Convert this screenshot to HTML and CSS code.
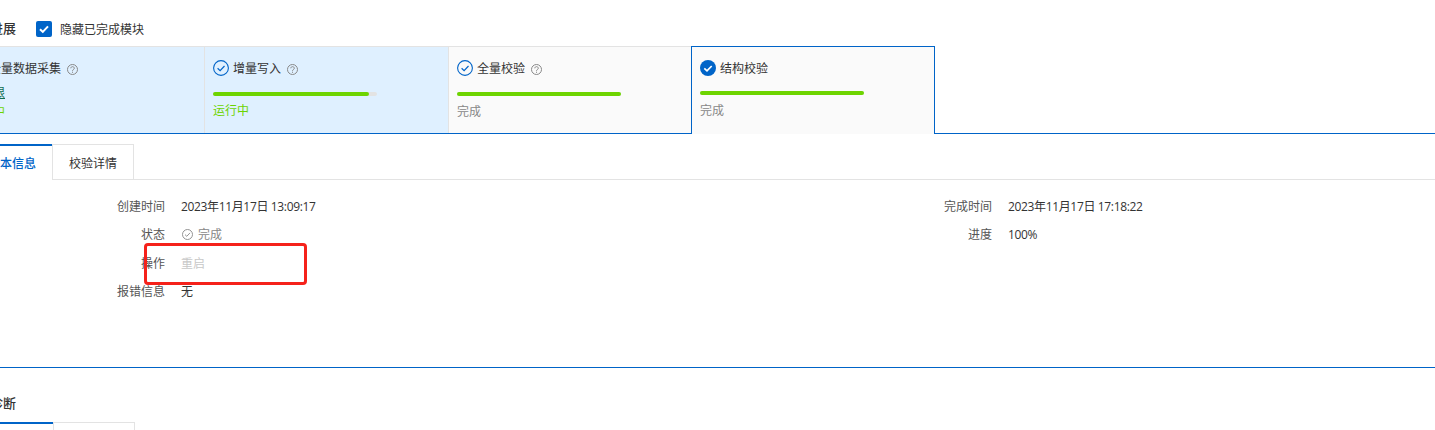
FILE: index.html
```html
<!DOCTYPE html>
<html lang="zh-CN">
<head>
<meta charset="utf-8">
<title>进展</title>
<link rel="stylesheet" href="styles.css">
</head>
<body>
<div class="page">
  <header class="section-head">
    <h2 class="section-title">进展</h2>
    <label class="hide-done">
      <span class="checkbox"><svg viewBox="0 0 16 16" width="16" height="16"><path d="M4 8.300l2.800 2.600L12 5.400" fill="none" stroke="#fff" stroke-width="2"/></svg></span>
      <span>隐藏已完成模块</span>
    </label>
  </header>

  <div class="steps">
    <div class="step step-running">
      <div class="step-head">
        <svg class="icon-check" viewBox="0 0 16 16"><circle cx="8" cy="8" r="7.400" fill="none" stroke="#0064c8" stroke-width="1.100"/><path d="M4.600 8.200l2.500 2.400 4.400-4.600" fill="none" stroke="#0064c8" stroke-width="1.200"/></svg>
        <span class="step-name">全量数据采集</span>
        <svg class="icon-help" viewBox="0 0 11 11"><circle cx="5.500" cy="5.500" r="5" fill="none" stroke="#888" stroke-width="1"/><path d="M3.800 4.300c0-2.200 3.500-2.200 3.500 0 0 1.300-1.800 1.200-1.800 2.500M5.500 7.700v1.100" fill="none" stroke="#888" stroke-width="1"/></svg>
      </div>
      <a class="step-link">无权限</a>
      <div class="step-status running">运行中</div>
    </div>

    <div class="step step-running">
      <div class="step-head">
        <svg class="icon-check" viewBox="0 0 16 16"><circle cx="8" cy="8" r="7.400" fill="none" stroke="#0064c8" stroke-width="1.100"/><path d="M4.600 8.200l2.500 2.400 4.400-4.600" fill="none" stroke="#0064c8" stroke-width="1.200"/></svg>
        <span class="step-name">增量写入</span>
        <svg class="icon-help" viewBox="0 0 11 11"><circle cx="5.500" cy="5.500" r="5" fill="none" stroke="#888" stroke-width="1"/><path d="M3.800 4.300c0-2.200 3.500-2.200 3.500 0 0 1.300-1.800 1.200-1.800 2.500M5.500 7.700v1.100" fill="none" stroke="#888" stroke-width="1"/></svg>
      </div>
      <div class="bar"><div class="bar-fill" style="width:95%"></div></div>
      <div class="step-status running">运行中</div>
    </div>

    <div class="step">
      <div class="step-head">
        <svg class="icon-check" viewBox="0 0 16 16"><circle cx="8" cy="8" r="7.400" fill="none" stroke="#0064c8" stroke-width="1.100"/><path d="M4.600 8.200l2.500 2.400 4.400-4.600" fill="none" stroke="#0064c8" stroke-width="1.200"/></svg>
        <span class="step-name">全量校验</span>
        <svg class="icon-help" viewBox="0 0 11 11"><circle cx="5.500" cy="5.500" r="5" fill="none" stroke="#888" stroke-width="1"/><path d="M3.800 4.300c0-2.200 3.500-2.200 3.500 0 0 1.300-1.800 1.200-1.800 2.500M5.500 7.700v1.100" fill="none" stroke="#888" stroke-width="1"/></svg>
      </div>
      <div class="bar"><div class="bar-fill" style="width:100%"></div></div>
      <div class="step-status">完成</div>
    </div>

    <div class="step step-active">
      <div class="step-head">
        <svg class="icon-check" viewBox="0 0 16 16"><circle cx="8" cy="8" r="8" fill="#0064c8"/><path d="M4.300 8.300l2.700 2.500 4.700-4.800" fill="none" stroke="#fff" stroke-width="1.700"/></svg>
        <span class="step-name">结构校验</span>
      </div>
      <div class="bar"><div class="bar-fill" style="width:100%"></div></div>
      <div class="step-status">完成</div>
    </div>
  </div>

  <nav class="tabs">
    <div class="tab tab-active">基本信息</div>
    <div class="tab">校验详情</div>
  </nav>

  <section class="info">
    <div class="field"><span class="field-label">创建时间</span><span class="field-value numeric">2023年11月17日 13:09:17</span></div>
    <div class="field"><span class="field-label">完成时间</span><span class="field-value numeric">2023年11月17日 17:18:22</span></div>
    <div class="field"><span class="field-label">状态</span><span class="field-value muted"><svg class="icon-state" viewBox="0 0 11 11"><circle cx="5.500" cy="5.500" r="5" fill="none" stroke="#888" stroke-width="0.900"/><path d="M3 5.600l1.800 1.700 3.200-3.400" fill="none" stroke="#888" stroke-width="0.900"/></svg>完成</span></div>
    <div class="field"><span class="field-label">进度</span><span class="field-value numeric">100%</span></div>
    <div class="field field-full"><span class="field-label">操作</span><span class="field-value disabled">重启</span></div>
    <div class="field field-full"><span class="field-label">报错信息</span><span class="field-value">无</span></div>
  </section>

  <div class="divider"></div>

  <h2 class="section-title lower-title">诊断</h2>
  <nav class="tabs tabs-lower">
    <div class="tab tab-active"></div>
    <div class="tab"></div>
  </nav>
</div>
<div class="annotation"></div>
</body>
</html>
```

FILE: styles.css
```css
html, body {
  margin: 0;
  height: 430px;
  overflow: hidden;
  background: #fff;
}
body {
  position: relative;
  font-family: "Open Sans", "Noto Sans CJK SC", sans-serif;
  font-size: 12px;
  color: #333;
}
.page {
  width: 1475px;
  margin-left: -40px;
  padding-top: 21px;
}
.section-head {
  display: flex;
  align-items: center;
  height: 16px;
  margin-bottom: 9px;
  padding-left: 30px;
}
.section-title {
  margin: 0 0 2px;
  font-size: 13px;
  font-weight: 500;
  line-height: 16px;
  color: #333;
}
.hide-done {
  display: flex;
  align-items: center;
  gap: 8px;
  margin-left: 20px;
}
.checkbox {
  display: block;
  width: 16px;
  height: 16px;
  border-radius: 2px;
  background: #0064c8;
}
.checkbox svg { display: block; }
.steps {
  display: flex;
  align-items: flex-start;
  border-bottom: 1px solid #0064c8;
}
.step {
  box-sizing: border-box;
  width: 244px;
  height: 87px;
  padding: 13px 8px 0;
  background: #fafafa;
  border-top: 1px solid #e3e3e3;
  border-left: 1px solid #e3e3e3;
}
.step-running { background: #dff0ff; }
.step-active {
  height: 88px;
  margin-bottom: -1px;
  margin-left: -1px;
  border: 1px solid #0064c8;
  border-bottom: 0;
}
.step-head {
  display: flex;
  align-items: center;
  height: 16px;
  margin-bottom: 16px;
}
.icon-check {
  width: 16px;
  height: 16px;
  margin-right: 4px;
  flex: none;
}
.step-name {
  line-height: 16px;
  margin-top: 2px;
}
.icon-help {
  width: 11px;
  height: 11px;
  margin: 2px 0 0 6px;
}
.bar {
  width: 164px;
  height: 4px;
  border-radius: 2px;
  background: #e3e3e3;
}
.step-active .bar { margin-top: -1px; }
.bar-fill {
  height: 100%;
  border-radius: 2px;
  background: #6dd400;
}
.step-status {
  margin-top: 7px;
  line-height: 18px;
  color: #888;
}
.step-status.running {
  margin-top: 6px;
  color: #6dd400;
}
.step-link {
  display: block;
  margin-top: -7px;
  line-height: 16px;
  color: #0f6e52;
  text-decoration: underline;
}
.step-link + .step-status.running { margin-top: 2px; }
.tabs {
  display: flex;
  height: 36px;
  margin-top: 10px;
  padding-left: 11px;
  box-sizing: border-box;
  border-bottom: 1px solid #e3e3e3;
}
.tab {
  box-sizing: border-box;
  width: 82px;
  height: 36px;
  padding-top: 1px;
  line-height: 36px;
  text-align: center;
  background: #fff;
  border: 1px solid #e3e3e3;
  border-left: 0;
}
.tab + .tab { border-left: 1px solid #e3e3e3; margin-left: -1px; }
.tab-active {
  border: 0;
  border-top: 2px solid #0064c8;
  padding-top: 0;
  line-height: 36px;
  font-weight: 500;
  color: #0064c8;
  height: 36px;
}
.info {
  display: grid;
  grid-template-columns: 827px 827px;
  grid-auto-rows: 28.3px;
  padding-top: 12px;
  height: 175px;
}
.field {
  display: flex;
  align-items: center;
  gap: 16px;
}
.field-full { grid-column: 1; }
.field-label {
  width: 205px;
  text-align: right;
  color: #555;
}
.numeric { letter-spacing: -0.35px; }
.muted { color: #888; }
.disabled { color: #c8c8c8; }
.icon-state {
  width: 11px;
  height: 11px;
  margin: 0 5px 0 1px;
  vertical-align: -1px;
}
.divider {
  height: 1px;
  background: #0064c8;
}
.lower-title {
  margin: 27px 0 11px 30px;
}
.tabs-lower {
  margin-top: 0;
  padding-left: 11px;
  border-bottom: 0;
}
.tabs-lower .tab + .tab { margin-left: 0; }
.annotation {
  position: absolute;
  left: 144px;
  top: 243px;
  width: 157px;
  height: 36px;
  border: 3px solid #f5221b;
  border-radius: 4px;
}
```
